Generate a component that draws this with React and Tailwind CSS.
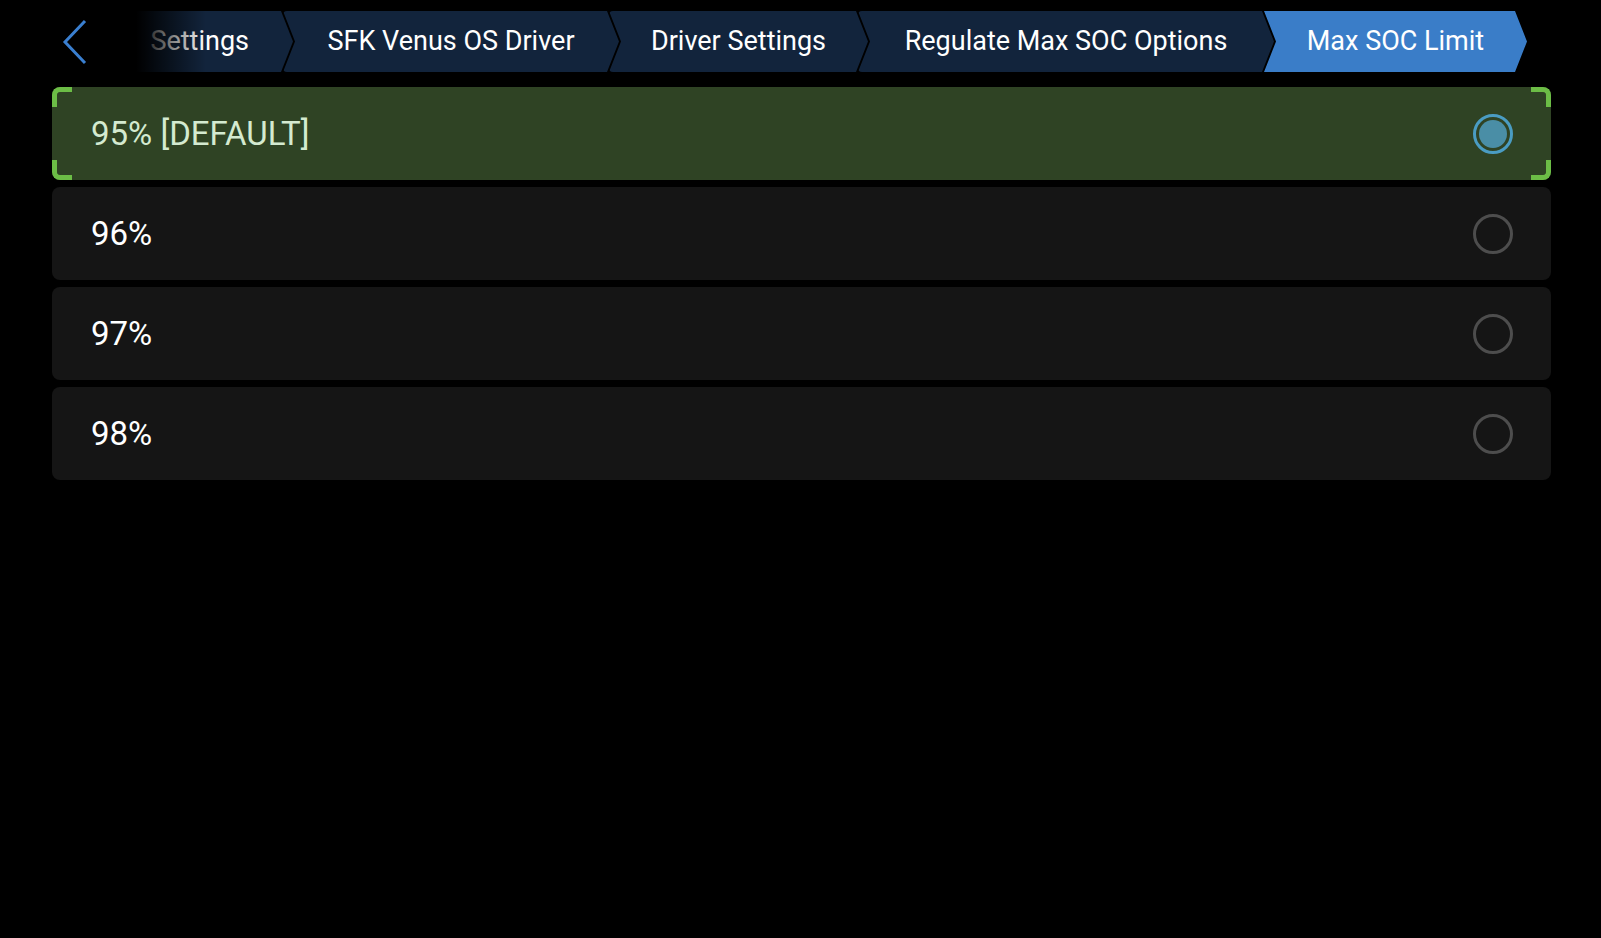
export default function App() {
  const clip = "[clip-path:polygon(0_0,calc(100%_-_12px)_0,100%_50%,calc(100%_-_12px)_100%,0_100%,12px_50%)]";
  const crumbs = [
    { t: "SFK Venus OS Driver", w: "w-[336px]" },
    { t: "Driver Settings", w: "w-[259px]" },
    { t: "Regulate Max SOC Options", w: "w-[416px]" },
  ];
  const rows = ["96%", "97%", "98%"];
  return (
    <div className="w-[1601px] h-[938px] bg-black overflow-hidden" style={{ fontFamily: "Roboto, 'Noto Sans', sans-serif" }}>
      <div className="flex items-center h-[61px] mt-[11px]">
        <div className="w-[106px] flex justify-center pl-[44px]">
          <svg width="30" height="46" viewBox="0 0 30 46"><path d="M25 2 L5 23 L25 44" fill="none" stroke="#3a7fd0" strokeWidth="3" /></svg>
        </div>
        <div className="relative flex items-center h-[61px] w-[187px] bg-[#12243c] [clip-path:polygon(0_0,calc(100%_-_12px)_0,100%_50%,calc(100%_-_12px)_100%,0_100%)] justify-end pr-[44px] text-[27px] text-white">
          Settings
          <div className="absolute left-0 top-0 h-full w-[100px] bg-gradient-to-r from-black from-30% to-transparent" />
        </div>
        {crumbs.map((c) => (
          <div key={c.t} className={`-ml-[10px] h-[61px] ${c.w} bg-[#12243c] ${clip} flex items-center justify-center text-[27px] text-white rounded-sm`}>
            {c.t}
          </div>
        ))}
        <div className={`-ml-[10px] h-[61px] w-[263px] bg-[#3a7dc8] ${clip} flex items-center justify-center text-[27px] text-white`}>
          Max SOC Limit
        </div>
      </div>
      <div className="mx-[52px] mt-[15px] flex flex-col gap-[7px] w-[1499px]">
        <div className="relative h-[93px] rounded-[8px] bg-[#2f4324] flex items-center justify-between pl-[39px] pr-[38px]">
          <span className="text-[33px] text-[#d4ead0]">95% [DEFAULT]</span>
          <div className="w-[40px] h-[40px] rounded-full border-[3px] border-[#4a9cc2] flex items-center justify-center">
            <div className="w-[28px] h-[28px] rounded-full bg-[#4a8ea6]" />
          </div>
          <div className="absolute left-0 top-0 w-[20px] h-[20px] border-l-[5px] border-t-[5px] border-[#6cbd46] rounded-tl-[8px]" />
          <div className="absolute right-0 top-0 w-[20px] h-[20px] border-r-[5px] border-t-[5px] border-[#6cbd46] rounded-tr-[8px]" />
          <div className="absolute left-0 bottom-0 w-[20px] h-[20px] border-l-[5px] border-b-[5px] border-[#6cbd46] rounded-bl-[8px]" />
          <div className="absolute right-0 bottom-0 w-[20px] h-[20px] border-r-[5px] border-b-[5px] border-[#6cbd46] rounded-br-[8px]" />
        </div>
        {rows.map((r) => (
          <div key={r} className="h-[93px] rounded-[8px] bg-[#151515] flex items-center justify-between pl-[39px] pr-[38px]">
            <span className="text-[33px] text-white">{r}</span>
            <div className="w-[40px] h-[40px] rounded-full border-[3px] border-[#4d4d4d]" />
          </div>
        ))}
      </div>
    </div>
  );
}
